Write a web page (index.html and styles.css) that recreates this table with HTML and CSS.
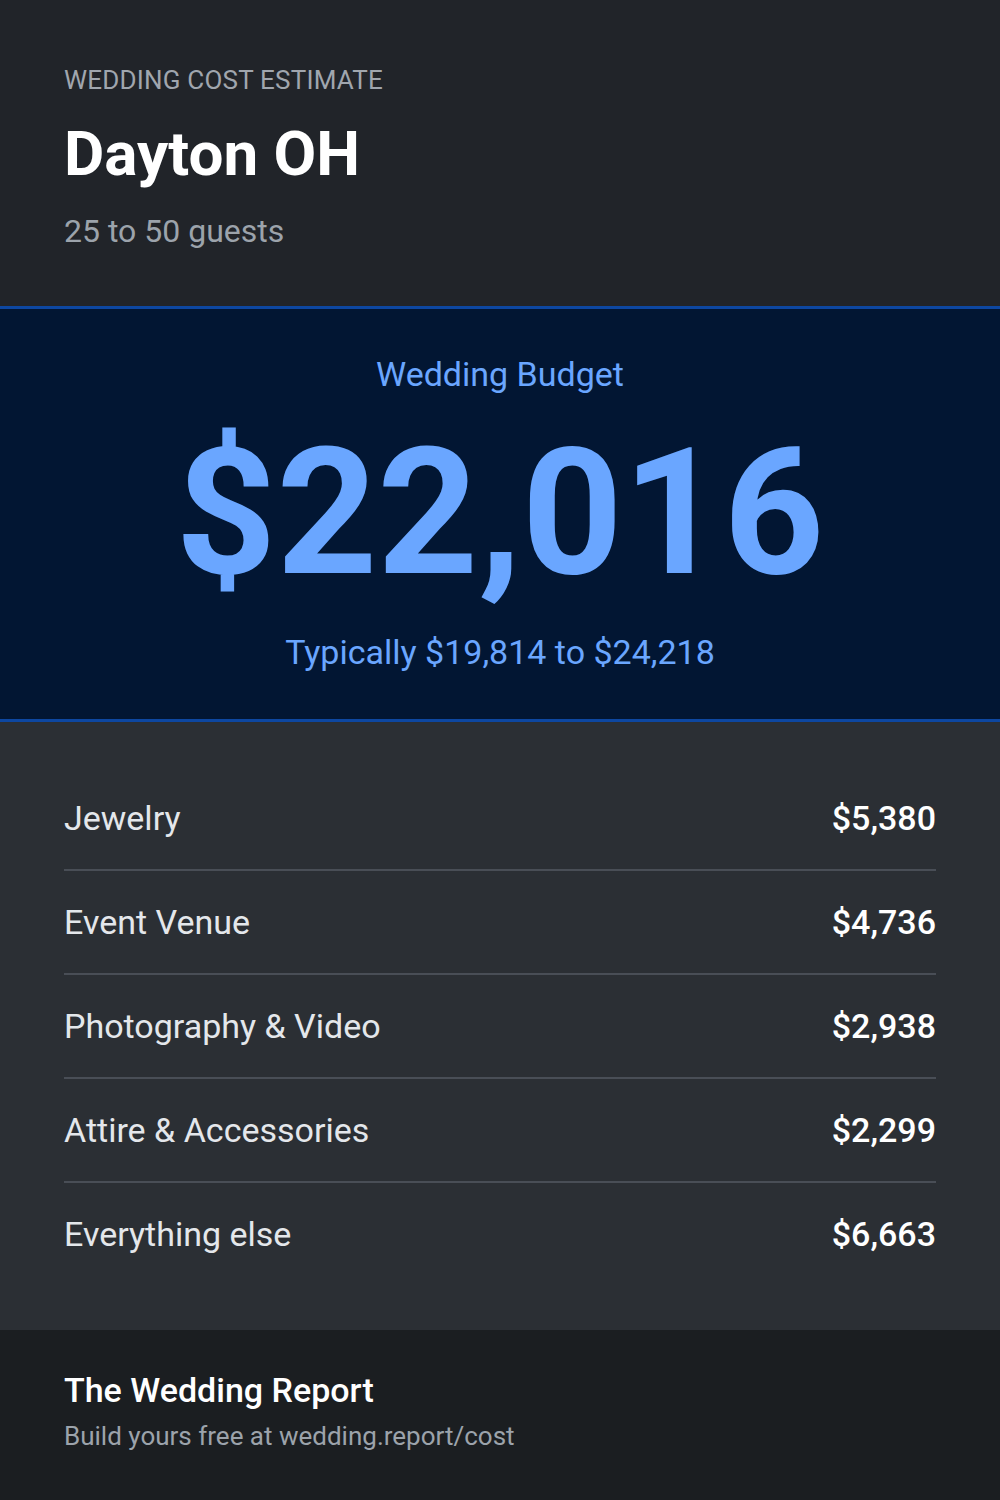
FILE: index.html
```html
<!DOCTYPE html>
<html lang="en">
<head>
  <meta charset="UTF-8" />
  <title>Wedding Cost Estimate - Dayton OH</title>
  <link rel="stylesheet" href="styles.css">
</head>
<body>
  <div class="header">
    <p class="eyebrow">WEDDING COST ESTIMATE</p>
    <h1>Dayton OH</h1>
    <p class="guests">25 to 50 guests</p>
  </div>

  <div class="budget">
    <p class="budget-label">Wedding Budget</p>
    <p class="budget-total">$22,016</p>
    <p class="budget-range">Typically $19,814 to $24,218</p>
  </div>

  <div class="items">
    <div class="row"><span>Jewelry</span><strong>$5,380</strong></div>
    <div class="row"><span>Event Venue</span><strong>$4,736</strong></div>
    <div class="row"><span>Photography &amp; Video</span><strong>$2,938</strong></div>
    <div class="row"><span>Attire &amp; Accessories</span><strong>$2,299</strong></div>
    <div class="row"><span>Everything else</span><strong>$6,663</strong></div>
  </div>

  <div class="footer">
    <p class="brand">The Wedding Report</p>
    <p class="link">Build yours free at wedding.report/cost</p>
  </div>
</body>
</html>
```

FILE: styles.css
```css
body {
  margin: 0;
  background: #1b1e21;
  color: #fff;
  font-family: Roboto, 'Liberation Sans', sans-serif;
}
p, h1 {
  margin: 0;
}
.header {
  background: #212429;
  padding: 64px 64px 57px;
}
.eyebrow {
  font-size: 26px;
  line-height: 32px;
  letter-spacing: 0.2px;
  color: #a0a6ae;
}
h1 {
  font-size: 62px;
  line-height: 72px;
  font-weight: 700;
  margin-top: 22px;
}
.guests {
  font-size: 32px;
  line-height: 36px;
  color: #9ca3ab;
  margin-top: 23px;
}
.budget {
  background: #021633;
  border-top: 3px solid #0d47a1;
  border-bottom: 3px solid #0d47a1;
  color: #6aa6ff;
  text-align: center;
  padding: 45px 0 47px;
}
.budget-label {
  font-size: 34px;
  line-height: 40px;
}
.budget-total {
  font-size: 176px;
  line-height: 176px;
  font-weight: 700;
  margin-top: 31px;
}
.budget-range {
  font-size: 34px;
  line-height: 40px;
  margin-top: 31px;
}
.items {
  background: #2b2f34;
  padding: 45px 64px 45px;
}
.row {
  display: flex;
  justify-content: space-between;
  font-size: 34px;
  line-height: 38px;
  padding: 32px 0;
  border-bottom: 2px solid #494e56;
}
.row:last-child {
  border-bottom: none;
}
.row span {
  color: #e4e7eb;
}
.row strong {
  font-weight: 500;
  color: #fff;
}
.footer {
  padding: 40px 64px 48px;
}
.brand {
  font-size: 34px;
  line-height: 40px;
  font-weight: 500;
}
.link {
  font-size: 26px;
  line-height: 32px;
  color: #9ca3ab;
  margin-top: 10px;
}
```
